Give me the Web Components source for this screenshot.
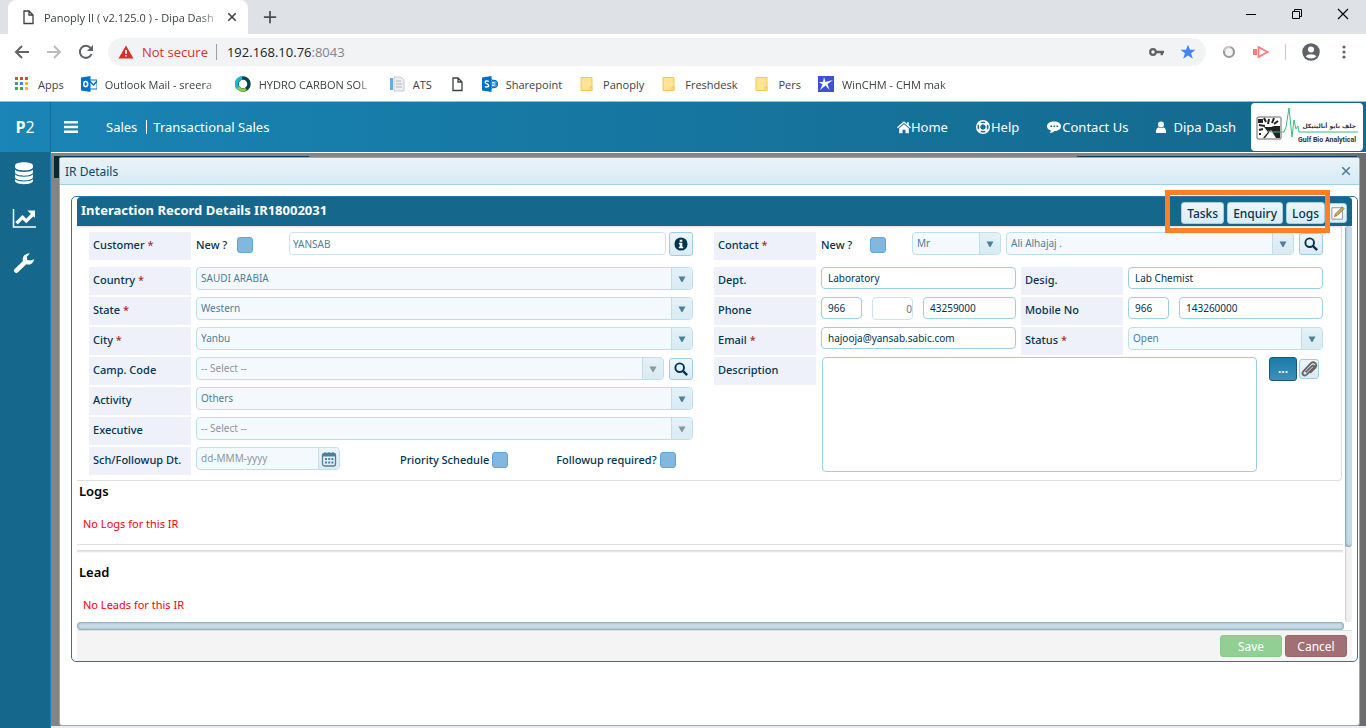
<!DOCTYPE html>
<html lang="en">
<head>
<meta charset="utf-8">
<title>Panoply II ( v2.125.0 ) - Dipa Dash</title>
<style>
  body {
    margin: 0;
    min-height: 100vh;
    display: flex;
    flex-direction: column;
    font-family: "Noto Sans", "Open Sans", sans-serif;
    font-size: 12px;
    color: #00344f;
    background: #fff;
  }
  panoply-app { flex: 1; }
</style>
</head>
<body>

<browser-chrome></browser-chrome>
<panoply-app>
  <app-header slot="header"></app-header>
  <side-rail slot="rail"></side-rail>
  <app-dialog heading="IR Details">
    <record-panel heading="Interaction Record Details IR18002031">
      <ir-form></ir-form>
      <record-section heading="Logs">No Logs for this IR</record-section>
      <record-section heading="Lead" class="split">No Leads for this IR</record-section>
    </record-panel>
  </app-dialog>
</panoply-app>

<template id="browser-chrome">
  <style>
    :host { display: block; color: #3c4043; font-family: "Open Sans", sans-serif; font-size: 11px; }
    button { border: 0; padding: 0; background: none; color: inherit; font: inherit; display: flex; }
    .tabs { display: flex; height: 34px; background: #dee1e6; align-items: center; }
    .tab {
      display: flex; align-items: center; box-sizing: border-box;
      width: 240px; height: 34px; margin-left: 8px; padding: 0 11px 0 12px;
      background: #fff; border-radius: 8px 8px 0 0; gap: 8px;
    }
    .fade { white-space: nowrap; -webkit-mask-image: linear-gradient(90deg, #000 88%, rgba(0, 0, 0, .2)); }
    .tab .fade { flex: 1; }
    .plus { margin-left: 15px; color: #4b4f54; }
    .window { margin-left: auto; display: flex; gap: 30px; padding-right: 15px; padding-bottom: 6px; color: #000; }
    .bar { display: flex; align-items: center; height: 36px; padding: 0 14px; color: #5f6368; }
    .nav { display: flex; gap: 16px; margin-right: 14px; }
    .nav .off { color: #b9bbbe; }
    .url {
      flex: 1; display: flex; align-items: center; height: 28px; padding: 0 10px;
      border-radius: 14px; background: #f1f3f4; font-size: 13px;
    }
    .warn { color: #d93025; margin-left: 8px; padding-right: 8px; border-right: 1px solid #9aa0a6; line-height: 16px; }
    .url input { flex: 1; min-width: 0; border: 0; padding: 0; background: none; font: inherit; color: #80868b; }
    .host { color: #202124; margin-left: 10px; }
    .url .marks { display: flex; gap: 16px; }
    .ext { display: flex; align-items: center; gap: 16px; margin-left: 15px; }
    .ext i { width: 1px; height: 16px; background: #c6c8cb; }
    .marks-bar { display: flex; align-items: center; height: 32px; padding: 0 0 3px 14px; border-bottom: 1px solid #b4b5b7; box-sizing: border-box; }
    a { display: flex; align-items: center; gap: 8px; color: inherit; text-decoration: none; margin-right: 17px; white-space: nowrap; }
    .clip { width: 113px; }
  </style>
  <div class="tabs">
    <div class="tab"><svg-icon name="page"></svg-icon><span class="fade">Panoply II ( v2.125.0 ) - Dipa Dash</span><button aria-label="Close tab"><svg-icon name="close" size="10"></svg-icon></button></div>
    <button class="plus" aria-label="New tab"><svg-icon name="plus" size="14"></svg-icon></button>
    <div class="window">
      <button aria-label="Minimize"><svg-icon name="minimize"></svg-icon></button>
      <button aria-label="Restore"><svg-icon name="restore"></svg-icon></button>
      <button aria-label="Close"><svg-icon name="window-close"></svg-icon></button>
    </div>
  </div>
  <div class="bar">
    <div class="nav">
      <button aria-label="Back"><svg-icon name="back"></svg-icon></button>
      <button class="off" aria-label="Forward"><svg-icon name="forward"></svg-icon></button>
      <button aria-label="Reload"><svg-icon name="reload"></svg-icon></button>
    </div>
    <div class="url">
      <svg-icon name="warning"></svg-icon><span class="warn">Not secure</span>
      <span class="host">192.168.10.76</span><input value=":8043" aria-label="Address">
      <div class="marks"><svg-icon name="key"></svg-icon><svg-icon name="star"></svg-icon></div>
    </div>
    <div class="ext">
      <svg-icon name="ring"></svg-icon><svg-icon name="play"></svg-icon><i></i>
      <button aria-label="Profile"><svg-icon name="person" size="18"></svg-icon></button>
      <button aria-label="Menu"><svg-icon name="dots"></svg-icon></button>
    </div>
  </div>
  <nav class="marks-bar">
    <a href="#"><svg-icon name="apps"></svg-icon>Apps</a>
    <a href="#"><svg-icon name="outlook"></svg-icon><span class="fade clip">Outlook Mail - sreera</span></a>
    <a href="#"><svg-icon name="hydro"></svg-icon><span class="fade clip">HYDRO CARBON SOL</span></a>
    <a href="#"><svg-icon name="ats"></svg-icon>ATS</a>
    <a href="#" aria-label="Page"><svg-icon name="page"></svg-icon></a>
    <a href="#"><svg-icon name="sharepoint"></svg-icon>Sharepoint</a>
    <a href="#"><svg-icon name="folder"></svg-icon>Panoply</a>
    <a href="#"><svg-icon name="folder"></svg-icon>Freshdesk</a>
    <a href="#"><svg-icon name="folder"></svg-icon>Pers</a>
    <a href="#"><svg-icon name="winchm"></svg-icon><span class="fade clip">WinCHM - CHM mak</span></a>
  </nav>
</template>

<template id="panoply-app">
  <style>
    :host { display: grid; grid-template: 50px 1fr / 51px 1fr; }
    ::slotted([slot=header]) { grid-column: 1 / -1; }
    main {
      display: flex; flex-direction: column; min-width: 0;
      padding: 4px 6px 0 8px;
      border-top: 1px solid #fff;
      background:
        linear-gradient(#06293a, #06293a) 3px 3px / 5px 22px no-repeat,
        linear-gradient(#0e3f57, #0e3f57) 3px 3px / 255px 2px no-repeat,
        linear-gradient(#0e3f57, #0e3f57) 1026px 3px / 280px 2px no-repeat,
        linear-gradient(90deg, #848484 90%, #6c6c6c);
    }
    footer { height: 2px; margin: 0 -6px 0 -8px; background: #e9ecf0; }
  </style>
  <slot name="header"></slot>
  <slot name="rail"></slot>
  <main><slot></slot><footer></footer></main>
</template>

<template id="app-header">
  <style>
    :host { display: flex; align-items: center; box-sizing: border-box; color: #fff; font-size: 13px; background: linear-gradient(90deg, #1a85b6, #1678a3 40%, #15688c); }
    .brand { width: 50px; height: 100%; display: grid; place-items: center; border-right: 1px solid #176a91; font-size: 16px; font-family: "Open Sans", sans-serif; }
    button { border: 0; padding: 0; background: none; color: inherit; margin: 0 27px 0 12px; display: flex; }
    a { color: inherit; text-decoration: none; display: flex; align-items: center; }
    a.lead { border-right: 1px solid #fff; padding-right: 9px; margin-right: 6px; line-height: 14px; }
    nav { display: flex; gap: 27px; margin-left: auto; }
    .user { margin: 0 15px 0 27px; gap: 6px; }
  </style>
  <div class="brand"><span><b>P</b>2</span></div>
  <button aria-label="Toggle menu"><svg-icon name="bars"></svg-icon></button>
  <a class="lead" href="#">Sales</a><a href="#">Transactional Sales</a>
  <nav>
    <a href="#"><svg-icon name="home" size="14"></svg-icon>Home</a>
    <a href="#"><svg-icon name="lifebuoy"></svg-icon>Help</a>
    <a href="#"><svg-icon name="comment"></svg-icon>Contact Us</a>
  </nav>
  <a class="user" href="#"><svg-icon name="user" size="12"></svg-icon>Dipa Dash</a>
  <gulf-logo></gulf-logo>
</template>

<template id="gulf-logo">
  <style>
    :host { display: block; width: 112px; height: 48px; margin-right: 3px; background: #fff; border-radius: 4px; }
    svg { display: block; }
  </style>
  <svg width="112" height="48" viewBox="0 0 112 48" role="img" aria-label="Gulf Bio Analytical">
    <rect x="6" y="14" width="24" height="22" rx="1" fill="#fff" stroke="#666"/>
    <path d="M13 24h7l3-1h6v12H12l5-6z" fill="#222"/>
    <path d="M14 35l6-8 5 8z" fill="#fff"/>
    <path d="M8 17h3v2H8zM13 15l2 4M18 16l-1 5M23 15l-2 5M27 18l-4 3M8 22l6 1M8 27l4-1M8 31h2" stroke="#222" stroke-width="2" fill="none"/>
    <path d="M17 28l4 1 7 0 5 0 2-5 3-19 3 29 2-17 2 9 2-3 1 6h59" fill="none" stroke="#3dbb7c"/>
    <text x="105" y="25" text-anchor="end" direction="ltr" font-family="DejaVu Sans" font-weight="bold" font-size="6" fill="#333">جلف بايو أناليتيكل</text>
    <text x="105" y="39" text-anchor="end" font-family="Roboto" font-weight="bold" font-size="7" fill="#333">Gulf Bio Analytical</text>
  </svg>
</template>

<template id="side-rail">
  <style>
    :host { display: flex; flex-direction: column; align-items: center; gap: 21px; padding: 9px 2px 0 0; background: #15688b; border-right: 1px solid #1985b7; color: #fff; }
    a { color: inherit; display: flex; }
  </style>
  <a href="#" aria-label="Data"><svg-icon name="database" size="24"></svg-icon></a>
  <a href="#" aria-label="Charts"><svg-icon name="chart" size="24"></svg-icon></a>
  <a href="#" aria-label="Tools"><svg-icon name="wrench" size="24"></svg-icon></a>
</template>

<template id="app-dialog">
  <style>
    :host { display: flex; flex-direction: column; flex: 1; box-sizing: border-box; background: #fff; border: 1px solid #a6a6a6; border-radius: 3px; }
    header { display: flex; align-items: center; justify-content: space-between; height: 26px; padding: 0 8px 0 5px; border-bottom: 1px solid #a3d0e4; background: linear-gradient(#e9f3f8, #d7ebf4); color: #04486b; }
    h1 { margin: 0; font-size: 12px; font-weight: 400; }
    button { border: 0; padding: 0; background: none; color: #4b7c96; display: flex; }
    .body { padding: 11px 1px 11px 11px; }
  </style>
  <header><h1></h1><button aria-label="Close dialog"><svg-icon name="close" size="10"></svg-icon></button></header>
  <div class="body"><slot></slot></div>
</template>

<template id="record-panel">
  <style>
    :host { display: block; padding: 0 5px; border: 1px solid #2f72a8; border-radius: 5px; }
    .title { display: flex; align-items: center; justify-content: space-between; height: 29px; padding: 0 5px 0 4px; background: #15688b; color: #fff; border-radius: 4px 4px 0 0; }
    h2 { margin: 0; padding-bottom: 3px; font-size: 13px; font-weight: 700; }
    .tools { display: flex; align-items: center; gap: 3px; padding-top: 3px; }
    .marked { display: flex; gap: 3px; position: relative; }
    .marked::after { content: ""; position: absolute; inset: -12px -5px -9px -16px; border: 5px solid #ff7f27; pointer-events: none; }
    .tools button { height: 22px; padding: 0 5px; border: 1px solid #a5d0e4; border-radius: 3px; background: linear-gradient(#edf6fa, #dbecf4); color: #00344f; font: 500 12px "Noto Sans", sans-serif; }
    .tools .edit { width: 19px; height: 20px; padding: 0; display: grid; place-items: center; }
    .view { display: grid; grid-template: 1fr 8px / 1fr 7px; }
    .content { padding-right: 2px; padding-bottom: 6px; min-width: 0; }
    .v { background: #f1f1f1; border-radius: 4px; box-shadow: inset 1px 0 1px #ccc; }
    .v div { height: 81%; border-radius: 4px; background: #c5dce8; box-shadow: inset 1px -1px 2px #7f9bab; }
    .h div { height: 8px; box-sizing: border-box; border-radius: 4px; background: #c5dce8; box-shadow: inset 0 0 2px 1px #8aa5b3; margin-right: 1px; }
    footer { display: flex; justify-content: flex-end; align-items: center; gap: 3px; height: 30px; padding-right: 5px; background: #f4f4f4; border-top: 1px solid #ddd; }
    footer button { width: 62px; height: 22px; padding: 0; border: 1px solid #86c98b; border-radius: 3px; background: #92cf94; color: #fff; font: 12px "Noto Sans", sans-serif; }
    footer .cancel { background: #a16f74; border-color: #96666b; }
  </style>
  <div class="title">
    <h2></h2>
    <div class="tools">
      <div class="marked"><button>Tasks</button><button>Enquiry</button><button>Logs</button></div>
      <button class="edit" aria-label="Edit"><svg-icon name="pencil" size="14"></svg-icon></button>
    </div>
  </div>
  <div class="view">
    <div class="content"><slot></slot></div>
    <div class="v"><div></div></div>
    <div class="h"><div></div></div>
  </div>
  <footer><button>Save</button><button class="cancel">Cancel</button></footer>
</template>

<template id="record-section">
  <style>
    :host { display: block; height: 63px; border-bottom: 1px solid #ddd; }
    :host(.split) { margin-top: 5px; padding-top: 11px; height: 54px; border-top: 1px solid #ddd; border-bottom: 0; box-shadow: inset 0 2px 2px -1px #ddd; }
    h3 { margin: 0 0 14px; padding: 0 2px; font-size: 13px; font-weight: 600; line-height: 20px; color: #000; }
    p { margin: 0; padding: 0 6px; color: #f00; font-size: 11px; line-height: 18px; }
  </style>
  <h3></h3>
  <p><slot></slot></p>
</template>

<template id="drop-down">
  <style>
    :host { display: grid; grid-template-columns: 1fr 21px; height: 23px; box-sizing: border-box; border: 1px solid #bfdfec; border-radius: 4px; background: #f3f9fc; color: #4f8098; overflow: hidden; min-width: 0; font-size: 10px; }
    ::slotted(*) { grid-area: 1 / 1 / 2 / 3; appearance: none; width: 100%; min-width: 0; border: 0; margin: 0; padding: 0 24px 2px 4px; background: none; font: inherit; color: inherit; opacity: 1; }
    span { grid-area: 1 / 2; display: grid; place-items: center; pointer-events: none; border-left: 1px solid #bfdfec; background: linear-gradient(#e4f2f8, #d8eaf3); }
  </style>
  <slot></slot><span><svg-icon name="caret" size="8"></svg-icon></span>
</template>

<template id="ir-form">
  <style>
    :host { display: block; font-size: 11px; }
    form {
      display: grid; grid-template-columns: minmax(0, 604fr) minmax(0, 609fr); column-gap: 21px;
      padding: 6px 18px 5px 12px; margin-right: 1px;
      border: solid #ddd; border-width: 0 1px 1px 0; border-radius: 0 0 4px 0;
      box-shadow: inset 0 2px 2px -1px #ddd;
    }
    .col { display: flex; flex-direction: column; gap: 2px; }
    .row { display: flex; gap: 5px; }
    .first { margin-bottom: 5px; }
    .name { flex: none; width: 102px; height: 28px; box-sizing: border-box; padding: 0 4px; line-height: 26px; background: #eef1fa; font-weight: 500; white-space: nowrap; }
    em { color: #b02a2a; font-style: normal; }
    .plain { line-height: 26px; font-weight: 500; white-space: nowrap; }
    drop-down { flex: 1; }
    .title { flex: 0 0 89px; }
    .dim { color: #8c979c; }
    input:not([type=checkbox]), textarea { box-sizing: border-box; height: 22px; min-width: 0; border: 1px solid #9fcde2; border-radius: 4px; padding: 0 6px; background: #fff; font: inherit; font-size: 10px; color: #00344f; }
    input.ro { height: 23px; border-color: #c9e3ef; color: #4f8098; padding: 0 3px; }
    .grow { flex: 1; }
    .code { width: 41px; }
    input.zero { text-align: right; padding: 0; }
    .gap { display: flex; gap: 10px; }
    input[type=checkbox] { appearance: none; flex: none; width: 16px; height: 16px; margin: 5px 0 0; border: 1px solid #5ba6da; border-radius: 3px; background: #82b8df; }
    button { flex: none; width: 24px; height: 24px; padding: 0; display: grid; place-items: center; border: 1px solid #9fcde2; border-radius: 3px; background: linear-gradient(#edf6fa, #d9ebf4); color: #00344f; }
    .info { margin-left: -2px; }
    .find { height: 22px; margin-top: 1px; }
    .c1 { width: 57px; margin-right: 31px; }
    .c2 { width: 65px; margin-right: 21px; }
    .two { flex: 1; display: grid; grid-template-columns: 195fr 102px 195fr; column-gap: 5px; min-width: 0; }
    .two > * { min-width: 0; }
    .two .name { width: auto; }
    .date { display: flex; width: 144px; height: 23px; box-sizing: border-box; border: 1px solid #bfdfec; border-radius: 4px; background: #f3f9fc; overflow: hidden; }
    .date input:not([type=checkbox]) { flex: 1; border: 0; background: none; padding: 0 4px 2px; height: auto; }
    .date input::placeholder { color: #8c979c; }
    .date button { width: 21px; height: 21px; border-width: 0 0 0 1px; border-color: #bfdfec; border-radius: 0; color: #4f8098; }
    .check { display: flex; gap: 3px; }
    .p { margin-left: 55px; }
    .f { margin-left: 43px; }
    textarea { flex: 1; margin-left: 1px; resize: none; }
    textarea#descr { height: 115px; }
    .more { width: 28px; background: linear-gradient(#1a7ca9, #3d91b8); border-color: #14587a; color: #fff; margin-left: 7px; font-weight: 700; font-size: 12px; }
    .clip { width: 20px; height: 20px; margin: 2px 4px 0 -3px; color: #666; }
  </style>
  <form onsubmit="return false">
    <div class="col">
      <div class="row first"><label class="name" for="customer">Customer <em>*</em></label>
        <div class="check c1"><label class="plain grow" for="newc">New ?</label><input type="checkbox" id="newc"></div>
        <input class="grow ro" id="customer" value="YANSAB" readonly>
        <button type="button" aria-label="Customer info" class="info"><svg-icon name="info" size="14"></svg-icon></button></div>
      <div class="row"><label class="name" for="country">Country <em>*</em></label><drop-down><select id="country"><option>SAUDI ARABIA</option></select></drop-down></div>
      <div class="row"><label class="name" for="state">State <em>*</em></label><drop-down><select id="state"><option>Western</option></select></drop-down></div>
      <div class="row"><label class="name" for="city">City <em>*</em></label><drop-down><select id="city"><option>Yanbu</option></select></drop-down></div>
      <div class="row"><label class="name" for="camp">Camp. Code</label><drop-down class="dim"><select id="camp"><option>-- Select --</option></select></drop-down>
        <button type="button" class="find" aria-label="Find campaign"><svg-icon name="search" size="14"></svg-icon></button></div>
      <div class="row"><label class="name" for="activity">Activity</label><drop-down><select id="activity"><option>Others</option></select></drop-down></div>
      <div class="row"><label class="name" for="exec">Executive</label><drop-down class="dim"><select id="exec"><option>-- Select --</option></select></drop-down></div>
      <div class="row"><label class="name" for="sched">Sch/Followup Dt.</label>
        <div class="date"><input id="sched" placeholder="dd-MMM-yyyy"><button type="button" aria-label="Pick date"><svg-icon name="calendar"></svg-icon></button></div>
        <div class="check p"><label class="plain" for="prio">Priority Schedule</label><input type="checkbox" id="prio"></div>
        <div class="check f"><label class="plain" for="follow">Followup required?</label><input type="checkbox" id="follow"></div></div>
    </div>
    <div class="col">
      <div class="row first"><label class="name" for="contact">Contact <em>*</em></label>
        <div class="check c2"><label class="plain grow" for="newp">New ?</label><input type="checkbox" id="newp"></div>
        <drop-down class="title"><select aria-label="Title"><option>Mr</option></select></drop-down>
        <drop-down><select id="contact"><option>Ali Alhajaj .</option></select></drop-down>
        <button type="button" class="find" aria-label="Find contact"><svg-icon name="search" size="14"></svg-icon></button></div>
      <div class="row"><label class="name" for="dept">Dept.</label>
        <div class="two"><input id="dept" value="Laboratory"><label class="name" for="desig">Desig.</label><input id="desig" value="Lab Chemist"></div></div>
      <div class="row"><label class="name" for="phone">Phone</label>
        <div class="two"><div class="gap"><input class="code" value="966" aria-label="Phone country code"><input class="code ro zero" value="0" aria-label="Area code"><input id="phone" class="grow" value="43259000"></div>
          <label class="name" for="mobile">Mobile No</label><div class="gap"><input class="code" value="966" aria-label="Mobile country code"><input id="mobile" class="grow" value="143260000"></div></div></div>
      <div class="row"><label class="name" for="email">Email <em>*</em></label>
        <div class="two"><input id="email" value="hajooja@yansab.sabic.com"><label class="name" for="status">Status <em>*</em></label><drop-down><select id="status"><option>Open</option></select></drop-down></div></div>
      <div class="row"><label class="name" for="descr">Description</label><textarea id="descr"></textarea>
        <button type="button" class="more">...</button><button type="button" class="clip" aria-label="Attach"><svg-icon name="paperclip" size="18"></svg-icon></button></div>
    </div>
  </form>
</template>

<script>

//Shapes are drawn on a 16 x 16 box and take the current text colour
const ICONS = {
  'page': '<path d="M4 2h5l4 4v8.500h-9z M9 2v4h4" fill="none" stroke="currentColor" stroke-width="1.300"/>',
  'close': '<path d="M2 2l12 12M14 2L2 14" stroke="currentColor" stroke-width="2.500"/>',
  'plus': '<path d="M8 1v14M1 8h14" stroke="currentColor" stroke-width="2"/>',
  'minimize': '<path d="M3 8.500h10" stroke="currentColor"/>',
  'restore': '<path d="M3.500 5.500h7v7h-7zM5.500 5.500v-2h7v7h-2" fill="none" stroke="currentColor"/>',
  'window-close': '<path d="M3 3l10 10M13 3L3 13" stroke="currentColor" stroke-width="1.200"/>',
  'back': '<path d="M15 8H2M8 2L2 8l6 6" fill="none" stroke="currentColor" stroke-width="2"/>',
  'forward': '<path d="M1 8h13M8 2l6 6-6 6" fill="none" stroke="currentColor" stroke-width="2"/>',
  'reload': '<path d="M13.500 10A6 6 0 1 1 12.500 4" fill="none" stroke="currentColor" stroke-width="2"/><path d="M15 1v6H9z" fill="currentColor"/>',
  'warning': '<path d="M8 1.500L15.500 14.500H.5z" fill="#d93025"/><path d="M7.200 6h1.600v4H7.200zM7.200 11h1.600v1.600H7.200z" fill="#fff"/>',
  'key': '<circle cx="5" cy="8" r="2.800" fill="none" stroke="#5f6368" stroke-width="2.200"/><path d="M8 6.800h8v2.400h-1v2h-2.400v-2H8z" fill="#5f6368"/>',
  'star': '<path d="M8 .8l2 5h5.500l-4.400 3.400 1.700 5.600L8 11.500l-4.800 3.300 1.700-5.600L.5 5.800H6z" fill="#4285f4"/>',
  'ring': '<circle cx="8" cy="8" r="5" fill="#f4f4f4" stroke="#999" stroke-width="2.200"/><path d="M3.500 7a5 5 0 0 1 6-4" stroke="#ccc" stroke-width="2" fill="none"/>',
  'play': '<path d="M0 5h4v6H0z" fill="#ff7b7b"/><path d="M5.500 3L14.500 8l-9 5z" fill="none" stroke="#ff7b7b" stroke-width="1.800"/>',
  'person': '<circle cx="8" cy="8" r="7.800" fill="#5f6368"/><circle cx="8" cy="5.800" r="2.700" fill="#fff"/><path d="M3.300 11.800C5 9.300 11 9.300 12.700 11.800 10.500 14.400 5.500 14.400 3.300 11.800z" fill="#fff"/>',
  'dots': '<g fill="#5f6368"><circle cx="8" cy="3" r="1.600"/><circle cx="8" cy="8" r="1.600"/><circle cx="8" cy="13" r="1.600"/></g>',
  'apps': '<path d="M1 1h3v3H1zM6 1h3v3H6zM11 1h3v3h-3z" fill="#ea4335"/><path d="M1 6h3v3H1zM1 11h3v3H1zM6 11h3v3H6z" fill="#34a853"/><path d="M6 6h3v3H6z" fill="#4285f4"/><path d="M11 6h3v3h-3zM11 11h3v3h-3z" fill="#fbbc05"/>',
  'outlook': '<path d="M8 4h8v9H8z" fill="#fff" stroke="#0072c6"/><path d="M8.500 5l4 4 3.500-4" fill="none" stroke="#0072c6" stroke-width="1.500"/><path d="M0 1.500L9.500 0v16L0 14.500z" fill="#0072c6"/><ellipse cx="4.700" cy="8" rx="2" ry="2.600" fill="none" stroke="#fff" stroke-width="1.500"/>',
  'hydro': '<circle cx="8" cy="8" r="6" fill="#fff" stroke="#07424f" stroke-width="3.500"/><path d="M3 12A6 6 0 0 1 7 2" fill="none" stroke="#18b7d6" stroke-width="3.500"/><path d="M3 11.500a6 6 0 0 0 8 1.500" fill="none" stroke="#8ccf3f" stroke-width="3"/>',
  'ats': '<path d="M5 1h7l3 3v11H5z" fill="#eceff2" stroke="#c5cbd1"/><path d="M1 2h3v12H1z" fill="#6aaddc"/><path d="M7 5h5M7 8h6M7 11h6" stroke="#aab3bb"/>',
  'sharepoint': '<circle cx="12" cy="8" r="3.500" fill="none" stroke="#0072c6" stroke-width="1.500"/><path d="M9 3l6 5-6 5M9 8h6" fill="none" stroke="#0072c6"/><path d="M0 1.500L9.500 0v16L0 14.500z" fill="#0072c6"/><path d="M6.800 5.500C5 4.300 3 5 3.200 6.500c.2 1.600 3.400 1.200 3.500 3 .1 1.500-2.200 2-3.800 1" fill="none" stroke="#fff" stroke-width="1.400"/>',
  'folder': '<path d="M2 1.500h11v13H2z" fill="#ffe493" stroke="#edc955"/><path d="M11 11h2v3.500h-2z" fill="#ffe493" stroke="#edc955"/>',
  'winchm': '<path d="M0 0h16v16H0z" fill="#3b52d8"/><path d="M6 1l1.500 5 7.500-2-5.500 4 2 6-4-4.500L2 14l2.500-5.500L1 6h4z" fill="#fff"/>',
  'bars': '<path d="M1 2h14v2.500H1zM1 6.700h14v2.500H1zM1 11.400h14v2.500H1z" fill="currentColor"/>',
  'home': '<path d="M8 1.500L0 8.300l1 1.200 7-6 7 6 1-1.200-2.500-2.100V2.500h-2v2z" fill="currentColor"/><path d="M2.500 9.500L8 4.800l5.500 4.700V15H9.700v-4H6.300v4H2.500z" fill="currentColor"/>',
  'lifebuoy': '<circle cx="8" cy="8" r="6.300" fill="none" stroke="currentColor" stroke-width="1.400"/><circle cx="8" cy="8" r="3.300" fill="none" stroke="currentColor" stroke-width="1.200"/><path d="M3.300 3.300l2.800 2.800M12.700 3.300L9.900 6.100M3.300 12.700l2.800-2.800M12.700 12.700L9.900 9.900" stroke="currentColor" stroke-width="3.200"/>',
  'comment': '<path d="M8 2.500c4 0 7 2 7 4.700S12 12 8.500 12c-1 1-3 2-5 2 .8-.7 1.300-1.500 1.300-2.500C2.500 10.800 1 9.200 1 7.200 1 4.500 4 2.500 8 2.500z" fill="currentColor"/><path d="M4.500 6.500h1.600v1.600H4.500zM7.500 6.500h1.600v1.600H7.500zM10.500 6.500h1.600v1.600h-1.600z" fill="#15688c"/>',
  'user': '<circle cx="8" cy="4.500" r="4" fill="currentColor"/><path d="M1.500 16c-1-4 1-7.500 3.500-7.500 1.800 1.200 4.200 1.200 6 0 2.500 0 4.500 3.500 3.500 7.500z" fill="currentColor"/>',
  'database': '<path d="M2 3c0-3 12-3 12 0v1c0 3-12 3-12 0zM2 5.800c2 2 10 2 12 0v1.700c0 3-12 3-12 0zM2 9c2 2 10 2 12 0v1.700c0 3-12 3-12 0zM2 12.200c2 2 10 2 12 0v1c0 3-12 3-12 0z" fill="currentColor"/>',
  'chart': '<path d="M1 2v12h15" fill="none" stroke="currentColor" stroke-width="1"/><path d="M3 11.500l4-4 2.500 2.500L13.500 6" fill="none" stroke="currentColor" stroke-width="2.200"/><path d="M15.300 3v5L10.300 3z" fill="currentColor"/>',
  'wrench': '<path d="M14.800 5.500a4 4 0 0 1-5.300 3.300L4 14.200a1.500 1.500 0 0 1-2.200-2.200l5.500-5.300A4 4 0 0 1 12 1.700L9.800 3.800l.4 2.200 2.200.3z" fill="currentColor"/>',
  'pencil': '<path d="M1 2h12v13H1z" fill="#fff" stroke="#888"/><path d="M4 12l1-3 8-8 2 2-8 8z" fill="#d9ab3c" stroke="#555" stroke-width=".7"/>',
  'caret': '<path d="M1 3h14L9 14H7z" fill="currentColor"/>',
  'search': '<circle cx="6.500" cy="6.500" r="4.900" fill="none" stroke="currentColor" stroke-width="2.200"/><path d="M10 10l5 5" stroke="currentColor" stroke-width="2.800"/>',
  'info': '<circle cx="8" cy="8" r="7.500" fill="currentColor"/><path d="M6.500 3h3v2.300h-3zM5.500 6.500h4v4.500h1v1.800h-5V11h1V8.300h-1z" fill="#fff"/>',
  'calendar': '<rect x="1.500" y="2.500" width="13" height="12.500" rx="2" fill="none" stroke="currentColor" stroke-width="1.300"/><path d="M1.500 3h13v2h-13zM4 1v2M8 1v2M12 1v2" fill="currentColor" stroke="currentColor"/><path d="M4 7h2v2H4zM7.200 7h2v2h-2zM10.400 7h2v2h-2zM4 10.500h2v2H4zM7.200 10.500h2v2h-2zM10.400 10.500h2v2h-2z" fill="currentColor"/>',
  'paperclip': '<path d="M5 11l5.500-5.500c1.500-1.500 3 0 1.500 1.500l-6 6c-2.500 2-5-.5-3-3L9.500 3c3-2.500 6.500.5 4 4L9 11.500" fill="none" stroke="currentColor" stroke-width="1.700"/>'
};

class SvgIcon extends HTMLElement {
  constructor() {
    super();
    this.attachShadow({mode: 'open'});
  }

  connectedCallback() {
    const size = this.getAttribute('size') || 16;
    this.shadowRoot.innerHTML = `
      <style>:host { display: inline-block; flex: none; } svg { display: block; }</style>
      <svg width="${size}" height="${size}" viewBox="0 0 16 16" aria-hidden="true">${ICONS[this.getAttribute('name')] || ''}</svg>`;
  }
}

customElements.define('svg-icon', SvgIcon);

//Base for the elements that are stamped from the template named like their tag
class TemplateElement extends HTMLElement {
  constructor() {
    super();
    const template = document.getElementById(this.localName);
    this.attachShadow({mode: 'open'}).appendChild(template.content.cloneNode(true));
  }

  connectedCallback() {
    const title = this.shadowRoot.querySelector('h1, h2, h3');
    if (title) title.textContent = this.getAttribute('heading');
  }
}

customElements.define('drop-down', class DropDown extends TemplateElement {});
customElements.define('gulf-logo', class GulfLogo extends TemplateElement {});
customElements.define('browser-chrome', class BrowserChrome extends TemplateElement {});
customElements.define('app-header', class AppHeader extends TemplateElement {});
customElements.define('side-rail', class SideRail extends TemplateElement {});
customElements.define('ir-form', class IrForm extends TemplateElement {});
customElements.define('record-section', class RecordSection extends TemplateElement {});
customElements.define('record-panel', class RecordPanel extends TemplateElement {});
customElements.define('app-dialog', class AppDialog extends TemplateElement {});
customElements.define('panoply-app', class PanoplyApp extends TemplateElement {});

</script>
</body>
</html>
